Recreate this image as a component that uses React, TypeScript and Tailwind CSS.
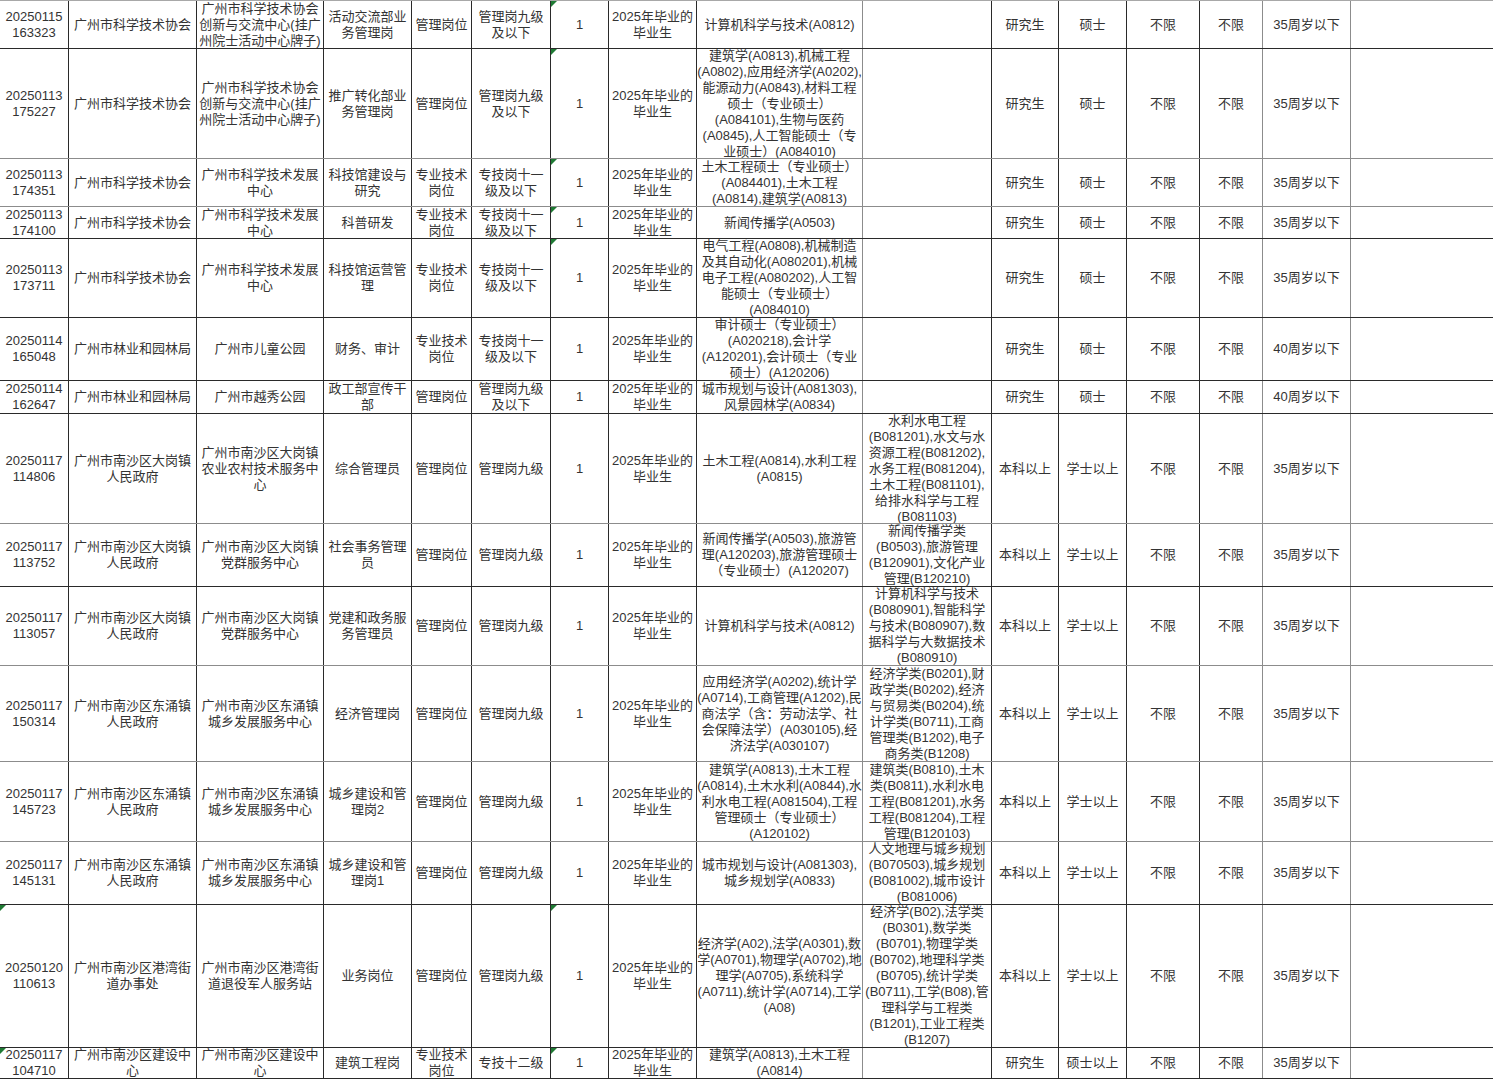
import React from "react";

// column width classes (left to right), summing to 1493px
const COLS = [
  "w-[69px]", "w-[128px]", "w-[127px]", "w-[88px]", "w-[60px]", "w-[79px]", "w-[58px]", "w-[88px]",
  "w-[166px]", "w-[129px]", "w-[67px]", "w-[68px]", "w-[73px]", "w-[63px]", "w-[88px]", "w-[142px]",
];
// columns whose right rule is light grey instead of near black
const GREY_COLS = [8, 13, 14];

type Row = {
  h: string;
  grey?: boolean;
  flags?: number[]; // columns that show the green corner marker
  cells: string[][];
};

const GRAD = ["2025年毕业的", "毕业生"];
const KEXIE = ["广州市科学技术协会"];
const CHUANGXIN = ["广州市科学技术协会", "创新与交流中心(挂广", "州院士活动中心牌子)"];
const FAZHAN = ["广州市科学技术发展", "中心"];
const GUANLI = ["管理岗位"];
const ZHUANJI = ["专业技术", "岗位"];
const JIU_YIXIA = ["管理岗九级", "及以下"];
const SHIYI = ["专技岗十一", "级及以下"];
const JIU = ["管理岗九级"];
const YJS = ["研究生", "硕士", "不限", "不限"].map((s) => [s]);
const BK = ["本科以上", "学士以上", "不限", "不限"].map((s) => [s]);
const AGE35 = ["35周岁以下"];
const AGE40 = ["40周岁以下"];
const DAGANG = ["广州市南沙区大岗镇", "人民政府"];
const DAGANG_DQ = ["广州市南沙区大岗镇", "党群服务中心"];
const DONGYONG = ["广州市南沙区东涌镇", "人民政府"];
const DONGYONG_CX = ["广州市南沙区东涌镇", "城乡发展服务中心"];

const ROWS: Row[] = [
  {
    h: "h-[48px]",
    flags: [6],
    cells: [
      ["20250115", "163323"], KEXIE, CHUANGXIN, ["活动交流部业", "务管理岗"], GUANLI, JIU_YIXIA, ["1"], GRAD,
      ["计算机科学与技术(A0812)"], [], ...YJS, AGE35, [],
    ],
  },
  {
    h: "h-[110px]",
    grey: true,
    flags: [6],
    cells: [
      ["20250113", "175227"], KEXIE, CHUANGXIN, ["推广转化部业", "务管理岗"], GUANLI, JIU_YIXIA, ["1"], GRAD,
      [
        "建筑学(A0813),机械工程",
        "(A0802),应用经济学(A0202),",
        "能源动力(A0843),材料工程",
        "硕士（专业硕士）",
        "(A084101),生物与医药",
        "(A0845),人工智能硕士（专",
        "业硕士）(A084010)",
      ],
      [], ...YJS, AGE35, [],
    ],
  },
  {
    h: "h-[48px]",
    grey: true,
    flags: [6],
    cells: [
      ["20250113", "174351"], KEXIE, FAZHAN, ["科技馆建设与", "研究"], ZHUANJI, SHIYI, ["1"], GRAD,
      ["土木工程硕士（专业硕士）", "(A084401),土木工程", "(A0814),建筑学(A0813)"],
      [], ...YJS, AGE35, [],
    ],
  },
  {
    h: "h-[32px]",
    flags: [6],
    cells: [
      ["20250113", "174100"], KEXIE, FAZHAN, ["科普研发"], ZHUANJI, SHIYI, ["1"], GRAD,
      ["新闻传播学(A0503)"], [], ...YJS, AGE35, [],
    ],
  },
  {
    h: "h-[79px]",
    flags: [6],
    cells: [
      ["20250113", "173711"], KEXIE, FAZHAN, ["科技馆运营管", "理"], ZHUANJI, SHIYI, ["1"], GRAD,
      [
        "电气工程(A0808),机械制造",
        "及其自动化(A080201),机械",
        "电子工程(A080202),人工智",
        "能硕士（专业硕士）",
        "(A084010)",
      ],
      [], ...YJS, AGE35, [],
    ],
  },
  {
    h: "h-[63px]",
    cells: [
      ["20250114", "165048"], ["广州市林业和园林局"], ["广州市儿童公园"], ["财务、审计"], ZHUANJI, SHIYI, ["1"], GRAD,
      ["审计硕士（专业硕士）", "(A020218),会计学", "(A120201),会计硕士（专业", "硕士）(A120206)"],
      [], ...YJS, AGE40, [],
    ],
  },
  {
    h: "h-[33px]",
    cells: [
      ["20250114", "162647"], ["广州市林业和园林局"], ["广州市越秀公园"], ["政工部宣传干", "部"], GUANLI, JIU_YIXIA, ["1"], GRAD,
      ["城市规划与设计(A081303),", "风景园林学(A0834)"],
      [], ...YJS, AGE40, [],
    ],
  },
  {
    h: "h-[110px]",
    grey: true,
    cells: [
      ["20250117", "114806"], DAGANG, ["广州市南沙区大岗镇", "农业农村技术服务中", "心"], ["综合管理员"], GUANLI, JIU, ["1"], GRAD,
      ["土木工程(A0814),水利工程", "(A0815)"],
      [
        "水利水电工程",
        "(B081201),水文与水",
        "资源工程(B081202),",
        "水务工程(B081204),",
        "土木工程(B081101),",
        "给排水科学与工程",
        "(B081103)",
      ],
      ...BK, AGE35, [],
    ],
  },
  {
    h: "h-[63px]",
    cells: [
      ["20250117", "113752"], DAGANG, DAGANG_DQ, ["社会事务管理", "员"], GUANLI, JIU, ["1"], GRAD,
      ["新闻传播学(A0503),旅游管", "理(A120203),旅游管理硕士", "（专业硕士）(A120207)"],
      ["新闻传播学类", "(B0503),旅游管理", "(B120901),文化产业", "管理(B120210)"],
      ...BK, AGE35, [],
    ],
  },
  {
    h: "h-[79px]",
    grey: true,
    cells: [
      ["20250117", "113057"], DAGANG, DAGANG_DQ, ["党建和政务服", "务管理员"], GUANLI, JIU, ["1"], GRAD,
      ["计算机科学与技术(A0812)"],
      ["计算机科学与技术", "(B080901),智能科学", "与技术(B080907),数", "据科学与大数据技术", "(B080910)"],
      ...BK, AGE35, [],
    ],
  },
  {
    h: "h-[96px]",
    grey: true,
    cells: [
      ["20250117", "150314"], DONGYONG, DONGYONG_CX, ["经济管理岗"], GUANLI, JIU, ["1"], GRAD,
      [
        "应用经济学(A0202),统计学",
        "(A0714),工商管理(A1202),民",
        "商法学（含：劳动法学、社",
        "会保障法学）(A030105),经",
        "济法学(A030107)",
      ],
      [
        "经济学类(B0201),财",
        "政学类(B0202),经济",
        "与贸易类(B0204),统",
        "计学类(B0711),工商",
        "管理类(B1202),电子",
        "商务类(B1208)",
      ],
      ...BK, AGE35, [],
    ],
  },
  {
    h: "h-[80px]",
    grey: true,
    cells: [
      ["20250117", "145723"], DONGYONG, DONGYONG_CX, ["城乡建设和管", "理岗2"], GUANLI, JIU, ["1"], GRAD,
      [
        "建筑学(A0813),土木工程",
        "(A0814),土木水利(A0844),水",
        "利水电工程(A081504),工程",
        "管理硕士（专业硕士）",
        "(A120102)",
      ],
      ["建筑类(B0810),土木", "类(B0811),水利水电", "工程(B081201),水务", "工程(B081204),工程", "管理(B120103)"],
      ...BK, AGE35, [],
    ],
  },
  {
    h: "h-[63px]",
    cells: [
      ["20250117", "145131"], DONGYONG, DONGYONG_CX, ["城乡建设和管", "理岗1"], GUANLI, JIU, ["1"], GRAD,
      ["城市规划与设计(A081303),", "城乡规划学(A0833)"],
      ["人文地理与城乡规划", "(B070503),城乡规划", "(B081002),城市设计", "(B081006)"],
      ...BK, AGE35, [],
    ],
  },
  {
    h: "h-[143px]",
    flags: [0, 6],
    cells: [
      ["20250120", "110613"], ["广州市南沙区港湾街", "道办事处"], ["广州市南沙区港湾街", "道退役军人服务站"], ["业务岗位"], GUANLI, JIU, ["1"], GRAD,
      [
        "经济学(A02),法学(A0301),数",
        "学(A0701),物理学(A0702),地",
        "理学(A0705),系统科学",
        "(A0711),统计学(A0714),工学",
        "(A08)",
      ],
      [
        "经济学(B02),法学类",
        "(B0301),数学类",
        "(B0701),物理学类",
        "(B0702),地理科学类",
        "(B0705),统计学类",
        "(B0711),工学(B08),管",
        "理科学与工程类",
        "(B1201),工业工程类",
        "(B1207)",
      ],
      ...BK, AGE35, [],
    ],
  },
  {
    h: "h-[31px]",
    flags: [0, 6],
    cells: [
      ["20250117", "104710"], ["广州市南沙区建设中", "心"], ["广州市南沙区建设中", "心"], ["建筑工程岗"], ZHUANJI, ["专技十二级"], ["1"], GRAD,
      ["建筑学(A0813),土木工程", "(A0814)"],
      [], ["研究生"], ["硕士以上"], ["不限"], ["不限"], AGE35, [],
    ],
  },
];

function Flag() {
  return (
    <svg className="absolute left-0 top-0" width="6" height="6" viewBox="0 0 6 6">
      <polygon points="0,0 6,0 0,6" fill="#1f7a34" />
    </svg>
  );
}

function Cell({ lines, col, flag }: { lines: string[]; col: number; flag: boolean }) {
  const last = col === COLS.length - 1;
  const rule = last
    ? ""
    : GREY_COLS.includes(col)
    ? "border-r border-[#8c8c8c]"
    : "border-r border-[#2a2a2a]";
  return (
    <div
      className={`relative flex h-full shrink-0 flex-col items-center justify-center overflow-hidden whitespace-nowrap text-center ${COLS[col]} ${rule}`}
    >
      {flag && <Flag />}
      {lines.map((l, i) => (
        <div key={i}>{l}</div>
      ))}
    </div>
  );
}

export default function App() {
  return (
    <div className="h-[1080px] w-[1493px] overflow-hidden bg-white font-['Liberation_Sans','Noto_Sans_CJK_SC',sans-serif] text-[13px] leading-[16px] text-[#333]">
      <div className="border-t border-[#a8a8a8]">
        {ROWS.map((row, r) => (
          <div
            key={r}
            className={`flex ${row.h} ${row.grey ? "border-b border-[#8c8c8c]" : "border-b border-[#2a2a2a]"}`}
          >
            {COLS.map((_, c) => (
              <Cell key={c} col={c} lines={row.cells[c] ?? []} flag={!!row.flags?.includes(c)} />
            ))}
          </div>
        ))}
      </div>
    </div>
  );
}
